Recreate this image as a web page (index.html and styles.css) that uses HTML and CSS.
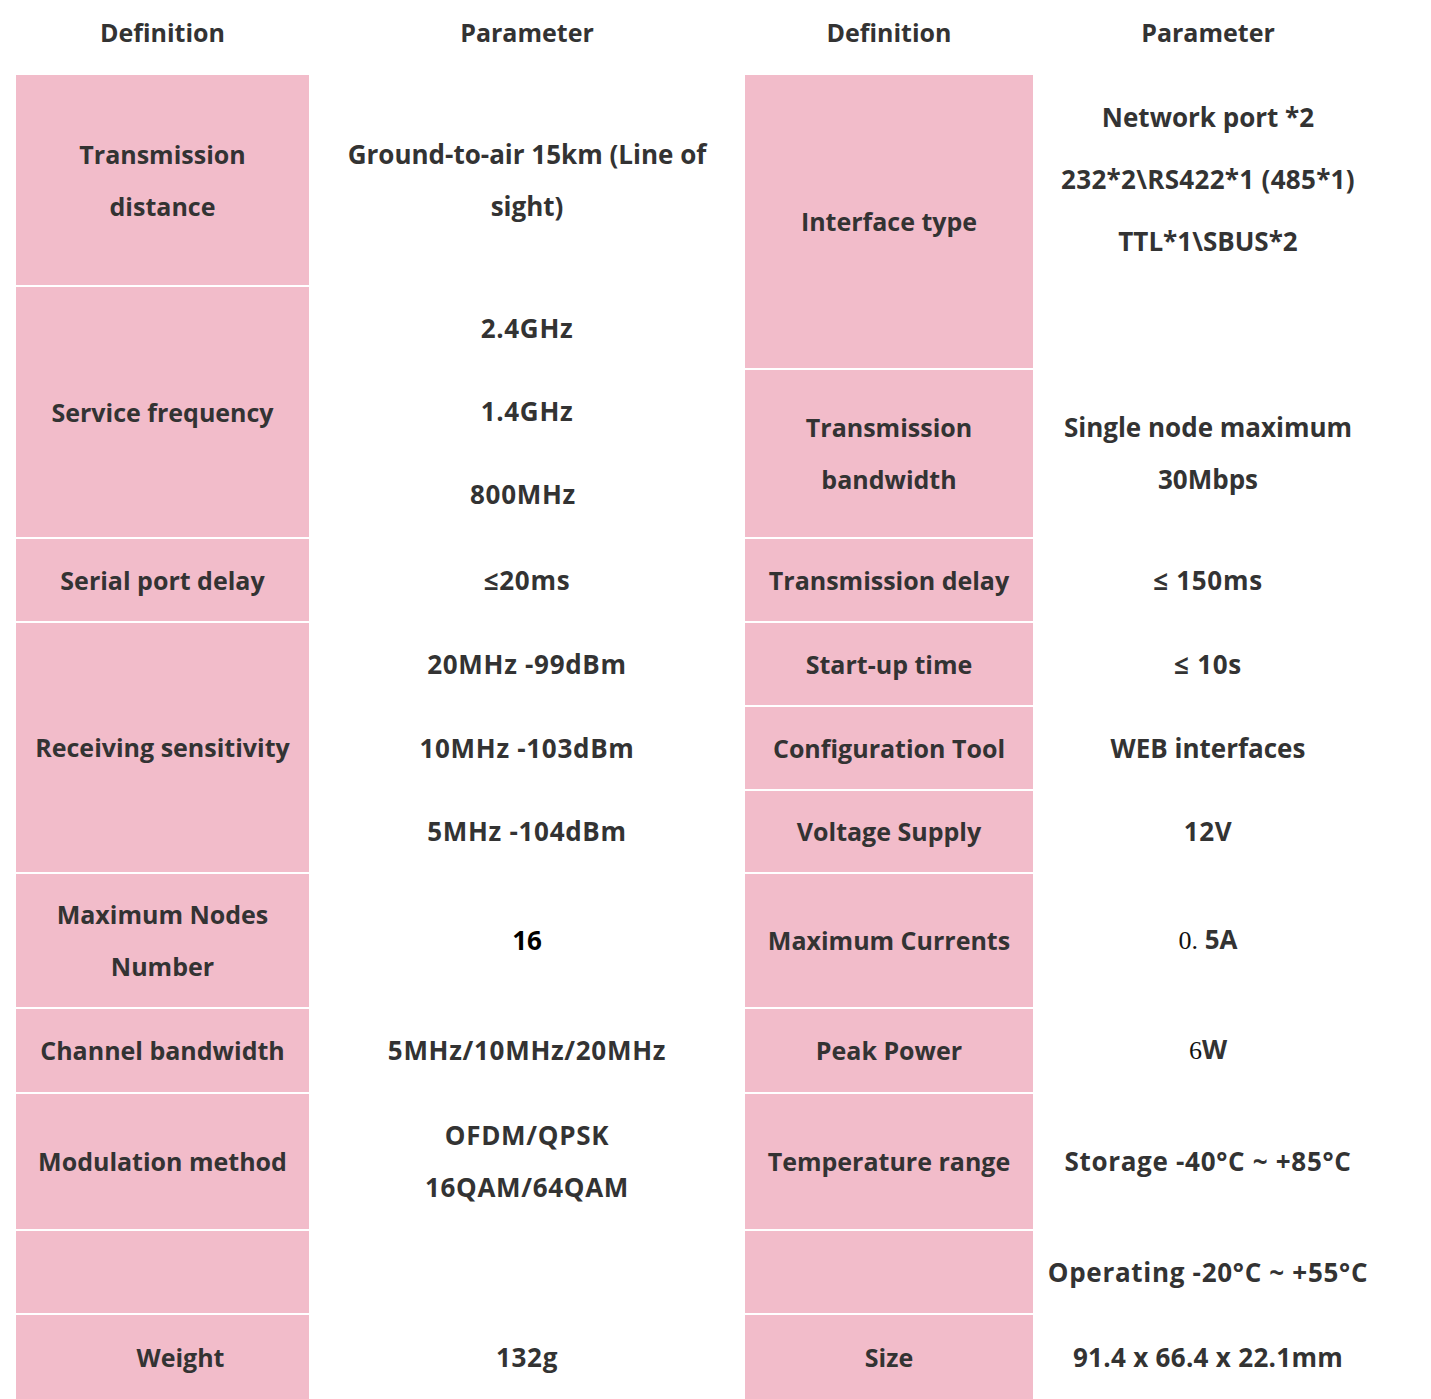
FILE: index.html
```html
<!DOCTYPE html>
<html lang="en">
<head>
<meta charset="utf-8">
<title>Specifications</title>
<link rel="stylesheet" href="styles.css">
</head>
<body>
<div class="spec">
  <div class="head c1">Definition</div>
  <div class="head c2">Parameter</div>
  <div class="head c3">Definition</div>
  <div class="head c4">Parameter</div>

  <!-- left half -->
  <div class="def c1 r-a"><span>Transmission<br>distance</span></div>
  <div class="val c2 r-a"><span>Ground-to-air 15km (Line of<br>sight)</span></div>
  <div class="def c1 r-bc"><span>Service frequency</span></div>
  <div class="val c2 r-bc num">
    <span class="line84">2.4GHz</span>
    <span class="line84">1.4GHz</span>
    <span class="line84 shift">800MHz</span>
  </div>
  <div class="def c1 r-d"><span>Serial port delay</span></div>
  <div class="val c2 r-d num"><span>≤20ms</span></div>
  <div class="def c1 r-eg"><span>Receiving sensitivity</span></div>
  <div class="val c2 r-e num"><span>20MHz -99dBm</span></div>
  <div class="val c2 r-f num"><span>10MHz -103dBm</span></div>
  <div class="val c2 r-g num"><span>5MHz -104dBm</span></div>
  <div class="def c1 r-h"><span>Maximum Nodes<br>Number</span></div>
  <div class="val c2 r-h dark"><span>16</span></div>
  <div class="def c1 r-i"><span>Channel bandwidth</span></div>
  <div class="val c2 r-i num"><span>5MHz/10MHz/20MHz</span></div>
  <div class="def c1 r-j"><span>Modulation method</span></div>
  <div class="val c2 r-j num"><span>OFDM/QPSK<br>16QAM/64QAM</span></div>
  <div class="def c1 r-k"></div>
  <div class="def c1 r-l weight"><span>Weight</span></div>
  <div class="val c2 r-l num"><span>132g</span></div>

  <!-- right half -->
  <div class="def c3 r-ab"><span>Interface type</span></div>
  <div class="val c4 r-ab top">
    <span class="line62">Network port *2</span>
    <span class="line62 slight">232*2\RS422*1 (485*1)</span>
    <span class="line62">TTL*1\SBUS*2</span>
  </div>
  <div class="def c3 r-c"><span>Transmission<br>bandwidth</span></div>
  <div class="val c4 r-c"><span>Single node maximum<br>30Mbps</span></div>
  <div class="def c3 r-d"><span>Transmission delay</span></div>
  <div class="val c4 r-d num"><span>≤ 150ms</span></div>
  <div class="def c3 r-e"><span>Start-up time</span></div>
  <div class="val c4 r-e num"><span>≤ 10s</span></div>
  <div class="def c3 r-f"><span>Configuration Tool</span></div>
  <div class="val c4 r-f"><span>WEB interfaces</span></div>
  <div class="def c3 r-g"><span>Voltage Supply</span></div>
  <div class="val c4 r-g num"><span>12V</span></div>
  <div class="def c3 r-h"><span>Maximum Currents</span></div>
  <div class="val c4 r-h"><span><span class="serif">0.</span> 5A</span></div>
  <div class="def c3 r-i"><span>Peak Power</span></div>
  <div class="val c4 r-i"><span><span class="serif">6</span>W</span></div>
  <div class="def c3 r-j"><span>Temperature range</span></div>
  <div class="val c4 r-j num"><span>Storage -40°C ~ +85°C</span></div>
  <div class="def c3 r-k"></div>
  <div class="val c4 r-k num"><span>Operating -20°C ~ +55°C</span></div>
  <div class="def c3 r-l"><span>Size</span></div>
  <div class="val c4 r-l slight"><span>91.4 x 66.4 x 22.1mm</span></div>
</div>
</body>
</html>
```
FILE: styles.css
```css
html, body {
  margin: 0;
  padding: 0;
  background: #ffffff;
}

body {
  font-family: "Open Sans", "Noto Sans", sans-serif;
  font-weight: 700;
  font-size: 25px;
  color: #333333;
  overflow: hidden;
}

.spec {
  display: grid;
  padding-left: 16px;
  grid-template-columns: 293px 436px 288px 350px;
  grid-template-rows: 73px 210px 81px 167px 82px 82px 82px 81px 133px 83px 135px 82px 84px;
  row-gap: 2px;
  height: 1399px;
  box-sizing: border-box;
}

.head {
  grid-row: 1;
  text-align: center;
  line-height: 52px;
  padding-top: 6px;
}

.c1 { grid-column: 1; }
.c2 { grid-column: 2; }
.c3 { grid-column: 3; }
.c4 { grid-column: 4; }

.r-a  { grid-row: 2; }
.r-ab { grid-row: 2 / 4; }
.r-bc { grid-row: 3 / 5; }
.r-c  { grid-row: 4; }
.r-d  { grid-row: 5; }
.r-e  { grid-row: 6; }
.r-eg { grid-row: 6 / 9; }
.r-f  { grid-row: 7; }
.r-g  { grid-row: 8; }
.r-h  { grid-row: 9; }
.r-i  { grid-row: 10; }
.r-j  { grid-row: 11; }
.r-k  { grid-row: 12; }
.r-l  { grid-row: 13; }

.def,
.val {
  display: flex;
  flex-direction: column;
  align-items: center;
  justify-content: center;
  text-align: center;
  line-height: 52px;
  white-space: nowrap;
  padding-bottom: 1px;
}

.def {
  background: #f2bcca;
}

.val {
  font-size: 26px;
}

.num {
  letter-spacing: 0.7px;
}

.slight {
  letter-spacing: 0.3px;
}

.line84 {
  line-height: 83px;
}

.shift {
  margin-right: 8px;
}

.top {
  justify-content: flex-start;
  padding-top: 11px;
}

.line62 {
  line-height: 62px;
}

.weight {
  padding-left: 36px;
}

.dark {
  color: #000000;
}

.serif {
  font-family: "Liberation Serif", "Times New Roman", serif;
  font-weight: 400;
  color: #111111;
}
```
